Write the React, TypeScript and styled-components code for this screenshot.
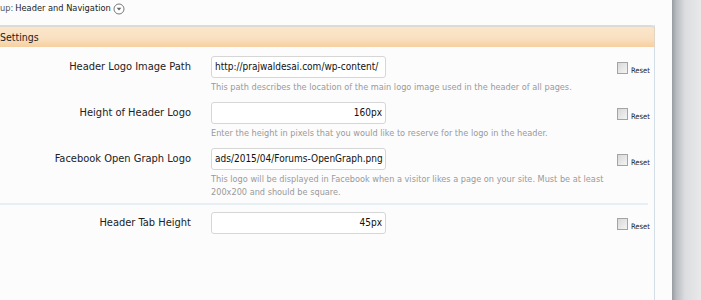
import React from "react";
import styled, { createGlobalStyle } from "styled-components";

const Global = createGlobalStyle`
  html, body { margin: 0; padding: 0; background: #fcfcfd; }
  body { font-family: "DejaVu Sans Condensed", "DejaVu Sans", Tahoma, sans-serif; color: #222; overflow: hidden; }
`;

const Page = styled.div`
  display: flex;
  width: 701px;
  height: 300px;
  overflow: hidden;
`;

const Main = styled.div`
  width: 672px;
  display: flex;
  flex-direction: column;
`;

const Side = styled.div`
  flex: 1;
  background: linear-gradient(to right, #979ca2 0%, #b8bcc0 15%, #dcdde0 45%, #e9e9ea 100%);
`;

const Crumb = styled.div`
  height: 25px;
  display: flex;
  align-items: flex-start;
  padding-top: 2px;
  box-sizing: border-box;
  font-size: 9.2px;
  line-height: 12px;
  color: #222;
  gap: 2px;
`;

const CrumbLabel = styled.span`
  color: #555;
`;

const CrumbIcon = styled.span`
  display: flex;
  margin-top: 1px;
`;

const Panel = styled.div`
  width: 659px;
  margin-left: -4px;
  border-right: 1px solid #d4dee7;
  flex: 1;
  box-sizing: border-box;
`;

const Head = styled.div`
  height: 22px;
  box-sizing: border-box;
  border-top: 2px solid #dcdcd4;
  border-right: 1px solid #e2d6c2;
  border-top-right-radius: 4px;
  margin-right: -1px;
  background: linear-gradient(to bottom, #fbe6cc 0%, #f9dfbf 60%, #f6cf9f 100%);
  display: flex;
  align-items: center;
  padding-left: 4px;
  font-size: 10.5px;
  color: #222;
`;

const Group = styled.div<{ $sep?: boolean }>`
  padding: ${(p) => (p.$sep ? "5px 0 0" : "3px 0 0")};
  border-bottom: ${(p) => (p.$sep ? "2px solid #e6eff4" : "none")};
  margin-right: 6px;
`;

const Row = styled.div`
  display: grid;
  grid-template-columns: 195px 406px 40px;
  column-gap: 20px;
  padding: 4px 0;
`;

const Label = styled.div`
  grid-column: 1;
  text-align: right;
  height: 22px;
  line-height: 22px;
  font-size: 11px;
  color: #222;
  white-space: nowrap;
`;

const Field = styled.div`
  grid-column: 2;
  display: flex;
  flex-direction: column;
`;

const Input = styled.div<{ $right?: boolean }>`
  width: 175px;
  height: 22px;
  box-sizing: border-box;
  border: 1px solid #d6d6d6;
  border-radius: 3px;
  background: #fff;
  font-size: 10px;
  line-height: 20px;
  padding: 0 3px;
  text-align: ${(p) => (p.$right ? "right" : "left")};
  white-space: nowrap;
  overflow: hidden;
  color: #111;
`;

const Desc = styled.div`
  margin-top: 3px;
  font-size: 9.1px;
  line-height: 13px;
  color: #9a9a9a;
  width: 405px;
`;

const ResetCell = styled.div`
  grid-column: 3;
  display: flex;
  align-items: flex-start;
  gap: 3px;
  padding-top: 6px;
  margin-left: -20px;
`;

const Box = styled.span`
  width: 9px;
  height: 10px;
  border: 1px solid #a4a4a4;
  background: linear-gradient(135deg, #d8d8d8, #f4f4f4);
  display: inline-block;
`;

const ResetText = styled.span`
  font-size: 7.5px;
  line-height: 7px;
  margin-top: 5px;
  color: #222;
`;

const Down = () => (
  <svg width="12" height="12" viewBox="0 0 12 12">
    <circle cx="6" cy="6" r="5" fill="#fff" stroke="#777" strokeWidth="1" />
    <path d="M3.6 4.8 L8.4 4.8 L6 7.4 Z" fill="#666" />
  </svg>
);

type Item = { label: string; value: string; right?: boolean; desc?: string };

const Setting = ({ label, value, right, desc }: Item) => (
  <Row>
    <Label>{label}</Label>
    <Field>
      <Input $right={right}>{value}</Input>
      {desc && <Desc>{desc}</Desc>}
    </Field>
    <ResetCell>
      <Box />
      <ResetText>Reset</ResetText>
    </ResetCell>
  </Row>
);

export default function App() {
  return (
    <>
      <Global />
      <Page>
        <Main>
          <Crumb>
            <CrumbLabel>up:</CrumbLabel>
            <span>Header and Navigation</span>
            <CrumbIcon>
              <Down />
            </CrumbIcon>
          </Crumb>
          <Panel>
            <Head>Settings</Head>
            <Group $sep>
              <Setting
                label="Header Logo Image Path"
                value="http://prajwaldesai.com/wp-content/"
                desc="This path describes the location of the main logo image used in the header of all pages."
              />
              <Setting
                label="Height of Header Logo"
                value="160px"
                right
                desc="Enter the height in pixels that you would like to reserve for the logo in the header."
              />
              <Setting
                label="Facebook Open Graph Logo"
                value="ads/2015/04/Forums-OpenGraph.png"
                desc="This logo will be displayed in Facebook when a visitor likes a page on your site. Must be at least 200x200 and should be square."
              />
            </Group>
            <Group>
              <Setting label="Header Tab Height" value="45px" right />
            </Group>
          </Panel>
        </Main>
        <Side />
      </Page>
    </>
  );
}
